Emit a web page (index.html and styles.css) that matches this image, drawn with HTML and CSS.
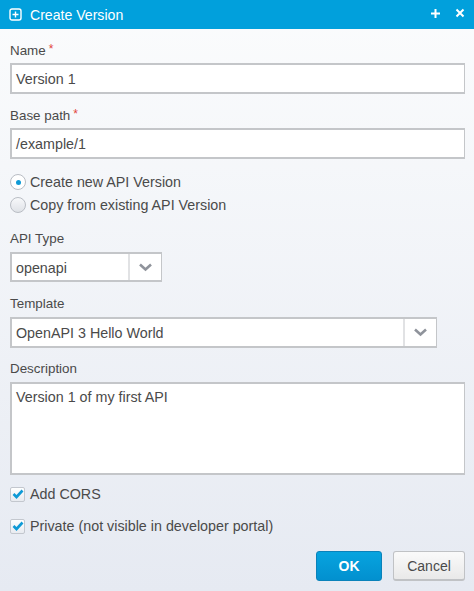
FILE: index.html
```html
<!DOCTYPE html>
<html lang="en">
<head>
<meta charset="utf-8">
<title>Create Version</title>
<link rel="stylesheet" href="styles.css">
</head>
<body>
<div class="dialog">
  <header class="titlebar">
    <svg class="title-icon" width="13" height="13" viewBox="0 0 13 13"><rect x="1" y="1" width="11" height="11" rx="2" fill="none" stroke="#fff" stroke-width="1.4"/><path d="M6.5 3.5v6M3.5 6.5h6" stroke="#fff" stroke-width="1.4"/></svg>
    <span class="title">Create Version</span>
    <svg class="tool tool-plus" width="11" height="11" viewBox="0 0 11 11"><path d="M5.5 1v9M1 5.5h9" stroke="#fff" stroke-width="2"/></svg>
    <svg class="tool" width="10" height="10" viewBox="0 0 10 10"><path d="M1.5 1.5l7 7M8.5 1.5l-7 7" stroke="#fff" stroke-width="2"/></svg>
  </header>
  <main class="form">
    <div class="label name-label">Name<span class="req">*</span></div>
    <div class="field">Version 1</div>
    <div class="label base-label">Base path<span class="req">*</span></div>
    <div class="field">/example/1</div>
    <div class="radios">
      <div class="radio-row"><span class="radio on"></span>Create new API Version</div>
      <div class="radio-row"><span class="radio"></span>Copy from existing API Version</div>
    </div>
    <div class="label type-label">API Type</div>
    <div class="select select-short"><span class="select-text">openapi</span><span class="select-btn"><svg width="15" height="9" viewBox="0 0 15 9"><path d="M2 1.5l5.5 5 5.5-5" fill="none" stroke="#8f939b" stroke-width="2.6"/></svg></span></div>
    <div class="label tmpl-label">Template</div>
    <div class="select select-long"><span class="select-text">OpenAPI 3 Hello World</span><span class="select-btn"><svg width="15" height="9" viewBox="0 0 15 9"><path d="M2 1.5l5.5 5 5.5-5" fill="none" stroke="#8f939b" stroke-width="2.6"/></svg></span></div>
    <div class="label desc-label">Description</div>
    <div class="field area">Version 1 of my first API</div>
    <div class="check-row cors"><span class="check"><svg width="12" height="10" viewBox="0 0 12 10"><path d="M1.5 5l3 3 6-6.5" fill="none" stroke="#0f9ad6" stroke-width="2.6"/></svg></span>Add CORS</div>
    <div class="check-row private"><span class="check"><svg width="12" height="10" viewBox="0 0 12 10"><path d="M1.5 5l3 3 6-6.5" fill="none" stroke="#0f9ad6" stroke-width="2.6"/></svg></span>Private (not visible in developer portal)</div>
    <div class="actions">
      <button class="btn ok">OK</button>
      <button class="btn cancel">Cancel</button>
    </div>
  </main>
</div>
</body>
</html>
```
FILE: styles.css
```css
html, body {
  margin: 0;
  padding: 0;
}
body {
  width: 474px;
  height: 591px;
  overflow: hidden;
  font-family: "Liberation Sans", Arial, sans-serif;
  font-size: 14px;
  color: #4a4a4a;
}
.dialog {
  height: 591px;
  display: flex;
  flex-direction: column;
  background: linear-gradient(#fbfcfd 0%, #e6eaf2 100%);
}
.titlebar {
  height: 29px;
  flex: none;
  background: #01a0dc;
  display: flex;
  align-items: center;
  padding: 0 9px 0 9px;
  color: #fff;
}
.title {
  margin-left: 8px;
  font-size: 14.1px;
  flex: 1;
}
.title-icon { margin-top: -1px; }
.tool { margin-top: -3px; }
.tool-plus { margin-right: 14px; }
.form {
  flex: 1;
  padding: 0 9px 0 10px;
  display: flex;
  flex-direction: column;
}
.label {
  height: 16px;
  line-height: 18px;
  font-size: 13.4px;
}
.name-label { margin-top: 13px; }
.base-label { margin-top: 13px; }
.type-label { margin-top: 14px; }
.tmpl-label { margin-top: 13px; }
.desc-label { margin-top: 12px; }
.req {
  color: #e2443c;
  margin-left: 3px;
  position: relative;
  top: -2px;
  font-size: 12px;
}
.field {
  box-sizing: border-box;
  height: 31px;
  margin-top: 5px;
  background: #fff;
  border: 2px solid #c4c6c9;
  border-width: 2px 1px 2px 2px;
  padding: 0 5px 0 4px;
  line-height: 28px;
  font-size: 14.3px;
}
.area {
  height: 93px;
  margin-top: 6px;
  line-height: 26px;
}
.radios {
  margin-top: 12px;
  display: flex;
  flex-direction: column;
  gap: 1px;
}
.radio-row {
  height: 22px;
  display: flex;
  align-items: center;
  font-size: 14.3px;
}
.radio {
  box-sizing: border-box;
  width: 16px;
  height: 16px;
  margin-right: 4px;
  border-radius: 50%;
  border: 1px solid #b9bdc4;
  background: linear-gradient(#f7f8fa, #dfe2e7);
  display: flex;
  align-items: center;
  justify-content: center;
}
.radio.on { background: #fff; }
.radio.on::after {
  content: "";
  width: 5px;
  height: 5px;
  border-radius: 50%;
  background: #0f9ad6;
}
.select {
  box-sizing: border-box;
  height: 30px;
  margin-top: 6px;
  background: #fff;
  border: 2px solid #c4c6c9;
  border-width: 2px 1px 2px 2px;
  display: flex;
}
.select-long { height: 31px; }
.select-short { width: 152px; }
.select-long { width: 427px; }
.select-text {
  flex: 1;
  padding-left: 4px;
  line-height: 28px;
  font-size: 14.3px;
}
.select-btn {
  width: 31px;
  flex: none;
  border-left: 2px solid #e1e2e4;
  display: flex;
  align-items: center;
  justify-content: center;
}
.check-row {
  display: flex;
  align-items: center;
  height: 16px;
  font-size: 14.3px;
}
.cors { margin-top: 11px; }
.private { margin-top: 16px; }
.check {
  box-sizing: border-box;
  width: 15px;
  height: 15px;
  margin-right: 5px;
  border: 1px solid #c3c7ce;
  border-radius: 2px;
  background: linear-gradient(#fff, #e8ebf0);
  display: flex;
  align-items: center;
  justify-content: center;
}
.actions {
  margin-top: 17px;
  display: flex;
  justify-content: flex-end;
  gap: 11px;
}
.btn {
  box-sizing: border-box;
  height: 30px;
  border-radius: 3px;
  font-family: "Liberation Sans", Arial, sans-serif;
  font-size: 14px;
  padding: 0;
}
.ok {
  width: 66px;
  background: linear-gradient(#07a4df, #0290cf);
  border: 1px solid #0a82ba;
  color: #fff;
  font-weight: bold;
}
.cancel {
  width: 72px;
  background: linear-gradient(#fafafa, #e9e9e9);
  border: 1px solid #c0c2c5;
  border-bottom-width: 2px;
  color: #4a4a4a;
}
```
